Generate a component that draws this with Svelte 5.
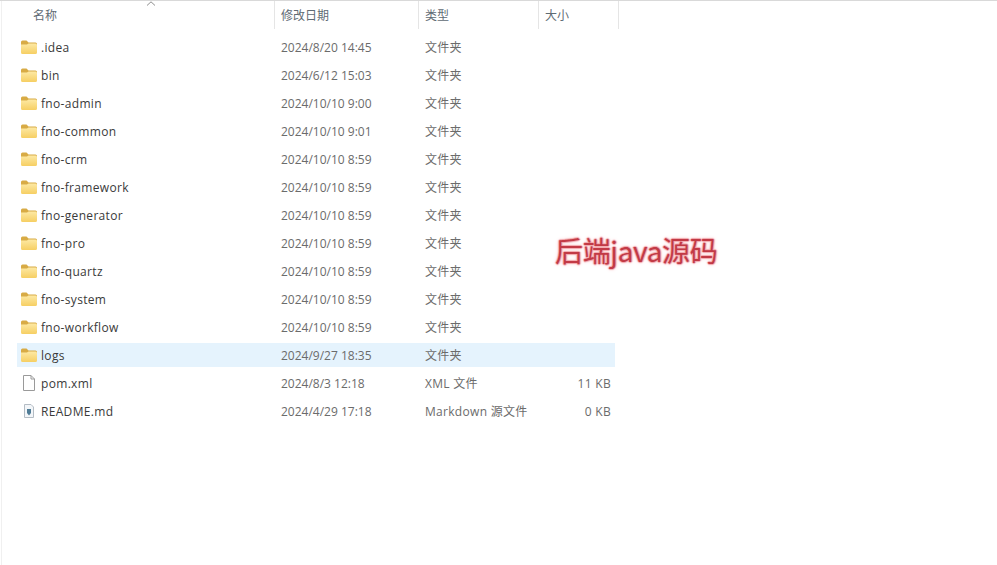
<script>
	const files = [
		{ name: ".idea", date: "2024/8/20 14:45", type: "文件夹", size: "", icon: "folder" },
		{ name: "bin", date: "2024/6/12 15:03", type: "文件夹", size: "", icon: "folder" },
		{ name: "fno-admin", date: "2024/10/10 9:00", type: "文件夹", size: "", icon: "folder" },
		{ name: "fno-common", date: "2024/10/10 9:01", type: "文件夹", size: "", icon: "folder" },
		{ name: "fno-crm", date: "2024/10/10 8:59", type: "文件夹", size: "", icon: "folder" },
		{ name: "fno-framework", date: "2024/10/10 8:59", type: "文件夹", size: "", icon: "folder" },
		{ name: "fno-generator", date: "2024/10/10 8:59", type: "文件夹", size: "", icon: "folder" },
		{ name: "fno-pro", date: "2024/10/10 8:59", type: "文件夹", size: "", icon: "folder" },
		{ name: "fno-quartz", date: "2024/10/10 8:59", type: "文件夹", size: "", icon: "folder" },
		{ name: "fno-system", date: "2024/10/10 8:59", type: "文件夹", size: "", icon: "folder" },
		{ name: "fno-workflow", date: "2024/10/10 8:59", type: "文件夹", size: "", icon: "folder" },
		{ name: "logs", date: "2024/9/27 18:35", type: "文件夹", size: "", icon: "folder", selected: true },
		{ name: "pom.xml", date: "2024/8/3 12:18", type: "XML 文件", size: "11 KB", icon: "file" },
		{ name: "README.md", date: "2024/4/29 17:18", type: "Markdown 源文件", size: "0 KB", icon: "md" }
	];
</script>

<div class="window">
	<svg width="0" height="0" class="defs">
		<defs>
			<linearGradient id="folder_body" x1="0" y1="0" x2="0" y2="1">
				<stop offset="0" stop-color="#fde9a4" />
				<stop offset="1" stop-color="#f6cf63" />
			</linearGradient>
		</defs>
	</svg>

	<div class="header">
		<div class="col name_col">
			<svg class="sort" width="10" height="5" viewBox="0 0 10 5"><path d="M1 4.5 L5 .8 L9 4.5" fill="none" stroke="#8f8f8f" /></svg>
			名称
		</div>
		<div class="col date_col">修改日期</div>
		<div class="col type_col">类型</div>
		<div class="col size_col">大小</div>
	</div>

	<div class="list">
		{#each files as f}
			<div class="row" class:selected={f.selected}>
				<div class="name">
					{#if f.icon == "folder"}
						<svg class="icon" width="18" height="16" viewBox="0 0 18 16">
							<path d="M1 3 Q1 1.5 2.5 1.5 H6.5 L8.5 3.5 H15.5 Q17 3.5 17 5 V6 H1 Z" fill="#d8ab45" />
							<path d="M1 5.5 H7 L8.5 4.5 H15.5 Q17 4.5 17 6 V13.5 Q17 15 15.5 15 H2.5 Q1 15 1 13.5 Z" fill="url(#folder_body)" />
						</svg>
					{:else if f.icon == "file"}
						<svg class="icon" width="18" height="16" viewBox="0 0 18 16">
							<path d="M3.5 .5 H11 L14.5 4 V15.5 H3.5 Z M11 .5 V4 H14.5" fill="#fff" stroke="#9a9a9a" />
						</svg>
					{:else}
						<svg class="icon" width="18" height="16" viewBox="0 0 18 16">
							<path d="M4.5 1.5 H11 L13.5 4 V14.5 H4.5 Z" fill="#f3f6f9" stroke="#b4bcc4" />
							<path d="M7 6 H11 V10 L9 12.5 L7 10 Z" fill="#4f7c96" />
						</svg>
					{/if}
					<span>{f.name}</span>
				</div>
				<div class="date">{f.date}</div>
				<div class="type">{f.type}</div>
				<div class="size">{f.size}</div>
			</div>
		{/each}
	</div>

	<div class="note">后端java源码</div>
</div>

<style>
	:global(body) {
		margin: 0;
		background: #fff;
	}

	.window {
		position: relative;
		width: 997px;
		height: 565px;
		box-sizing: border-box;
		overflow: hidden;
		background: #fff;
		border-top: 1px solid #d9d9d9;
		padding-left: 1px;
		font-family: "Open Sans", "Noto Sans CJK SC", sans-serif;
		font-size: 12px;
		color: #5c5c5c;
	}
	.window::before {
		content: "";
		position: absolute;
		left: 1px;
		top: 0;
		bottom: 0;
		width: 1px;
		background: #f0f0f0;
	}
	.defs { position: absolute; }

	.header {
		display: grid;
		grid-template-columns: 274px 144px 120px 80px;
		height: 28px;
		margin-bottom: 6px;
	}
	.col {
		position: relative;
		display: flex;
		align-items: center;
		padding-left: 6px;
		border-right: 1px solid #e5e5e5;
		color: #5f6b74;
	}
	.name_col { padding-left: 32px; }
	.sort {
		position: absolute;
		left: 145px;
		top: 0;
	}

	.list {
		display: flex;
		flex-direction: column;
		gap: 4px;
		margin-left: 16px;
		width: 598px;
	}
	.row {
		display: grid;
		grid-template-columns: 257px 144px 120px 77px;
		align-items: center;
		height: 24px;
	}
	.row.selected { background: #e5f3fd; }

	.name {
		display: flex;
		align-items: center;
		color: #3a3a3a;
		padding-left: 3px;
		letter-spacing: 0.32px;
	}
	.icon {
		width: 18px;
		flex: none;
		margin-right: 3px;
	}
	.date { padding-left: 7px; color: #6b6b6b; }
	.type { padding-left: 7px; color: #6b6b6b; letter-spacing: 0.3px; }
	.size { text-align: right; padding-right: 4px; color: #6b6b6b; letter-spacing: 0.3px; }

	.note {
		position: absolute;
		left: 555px;
		top: 231px;
		font-family: "Noto Sans CJK SC", "Open Sans", sans-serif;
		font-size: 28px;
		line-height: 36px;
		letter-spacing: -0.35px;
		color: #c23a46;
		text-shadow: 1px 0 1px #f2a9af, -1px 0 1px #f2a9af, 0 1px 1px #f2a9af, 0 -1px 1px #f2a9af, 0 0 4px #f8cfd2;
	}
</style>
